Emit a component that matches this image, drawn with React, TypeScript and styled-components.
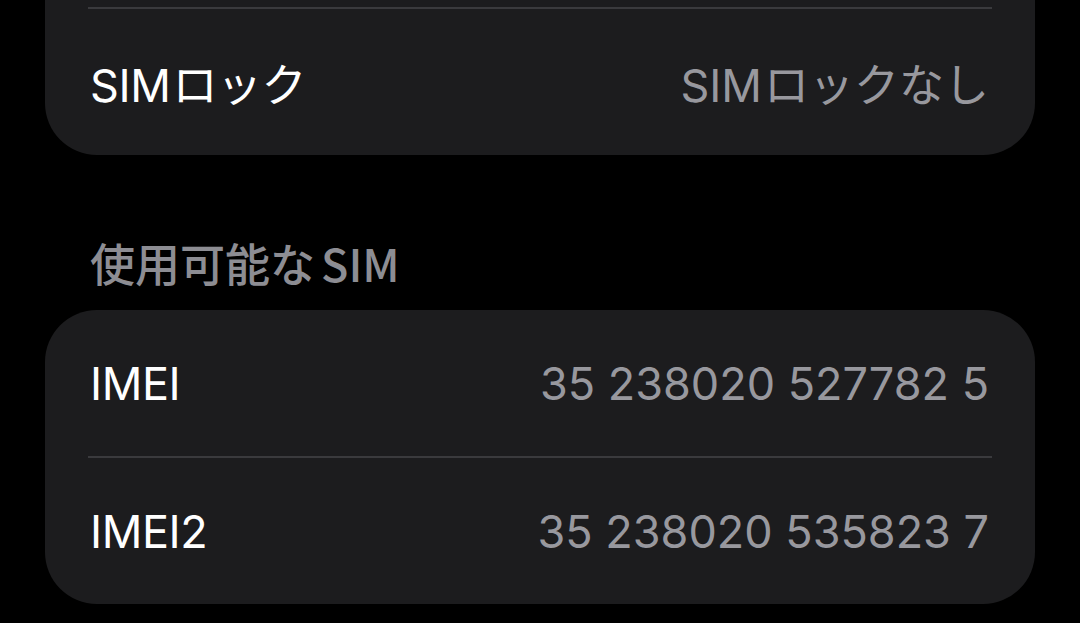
import React from "react";
import styled, { createGlobalStyle } from "styled-components";

const Global = createGlobalStyle`
  html, body { margin: 0; padding: 0; background: #000; }
  body { width: 1080px; height: 623px; overflow: hidden; }
  * { box-sizing: border-box; }
`;

const Page = styled.div`
  display: flex;
  flex-direction: column;
  padding: 0 45px;
  background: #000;
  height: 623px;
  font-family: Inter, "Noto Sans CJK JP", sans-serif;
  -webkit-font-smoothing: antialiased;
`;

const Card = styled.div<{ $clipped?: boolean }>`
  display: flex;
  flex-direction: column;
  background: #1c1c1e;
  border-radius: ${(p) => (p.$clipped ? "0 0 52px 52px" : "52px")};
  padding-top: ${(p) => (p.$clipped ? "7px" : "0")};
`;

const Separator = styled.div`
  height: 2px;
  margin: 0 43px;
  background: #3a3a3d;
`;

const Row = styled.div`
  display: flex;
  align-items: center;
  justify-content: space-between;
  height: 146px;
  padding: 0 46px 0 45px;
`;

const Label = styled.span`
  color: #ffffff;
  font-size: 45px;
  font-weight: 400;
  letter-spacing: -0.4px;
`;

const Value = styled.span`
  color: #98989e;
  font-size: 45px;
  font-weight: 400;
  letter-spacing: 0;
`;

const Gap = styled.span<{ $w?: number }>`
  display: inline-block;
  width: ${(p) => p.$w ?? 2}px;
`;

const SectionHeader = styled.div`
  height: 155px;
  display: flex;
  align-items: flex-end;
  padding: 0 0 21px 45px;
  color: #8d8d93;
  font-family: "Noto Sans CJK JP", sans-serif;
  font-size: 45px;
  font-weight: 500;
  line-height: 52px;
`;

type Item = { label: React.ReactNode; value: React.ReactNode; key: string };

const simRows: Item[] = [
  {
    key: "sim",
    label: (
      <>
        SIM<Gap />ロック
      </>
    ),
    value: (
      <>
        SIM<Gap />ロックなし
      </>
    ),
  },
];
const imeiRows: Item[] = [
  { key: "imei", label: "IMEI", value: "35 238020 527782 5" },
  { key: "imei2", label: "IMEI2", value: "35 238020 535823 7" },
];

function Group({ items, clipped }: { items: Item[]; clipped?: boolean }) {
  return (
    <Card $clipped={clipped}>
      {clipped && <Separator />}
      {items.map((it, i) => (
        <React.Fragment key={it.key}>
          {i > 0 && <Separator />}
          <Row>
            <Label>{it.label}</Label>
            <Value>{it.value}</Value>
          </Row>
        </React.Fragment>
      ))}
    </Card>
  );
}

export default function App() {
  return (
    <>
      <Global />
      <Page>
        <Group items={simRows} clipped />
        <SectionHeader>
          使用可能な<Gap $w={6} />SIM
        </SectionHeader>
        <Group items={imeiRows} />
      </Page>
    </>
  );
}
